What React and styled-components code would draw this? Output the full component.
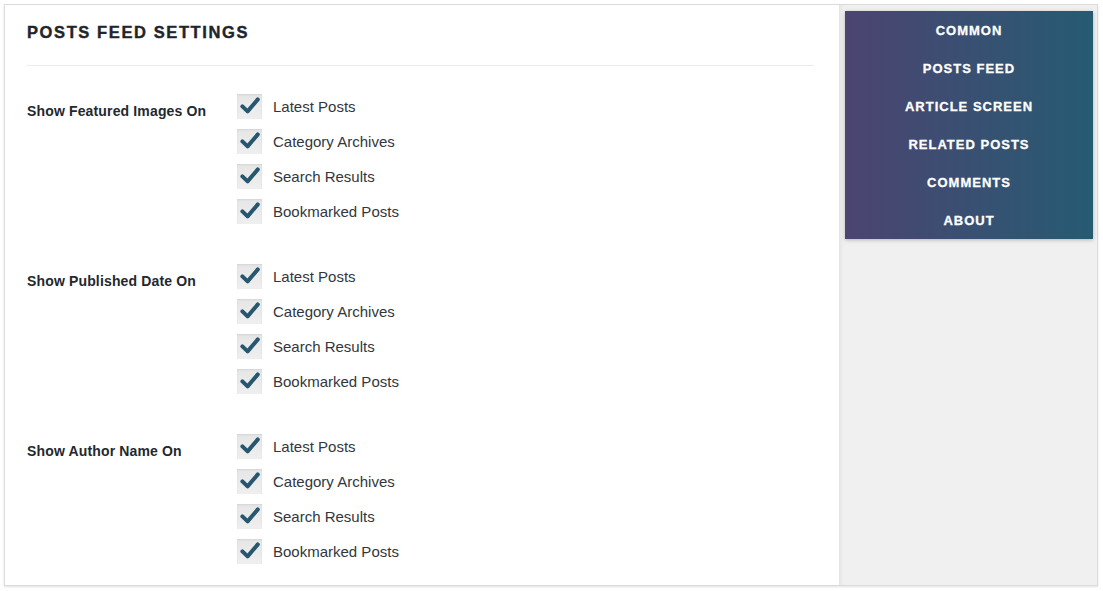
import React from 'react'
import styled, { createGlobalStyle } from 'styled-components'

const groups = [
  { label: 'Show Featured Images On' },
  { label: 'Show Published Date On' },
  { label: 'Show Author Name On' }
]

const options = ['Latest Posts', 'Category Archives', 'Search Results', 'Bookmarked Posts']

const navItems = ['Common', 'Posts Feed', 'Article Screen', 'Related Posts', 'Comments', 'About']

function Check() {
  return (
    <CheckBox>
      <svg width="20" height="20" viewBox="0 0 20 20">
        <path d="M2.4 10.4 L7.6 15.4 L17.8 3.4" fill="none" stroke="#27566f" strokeWidth="4" strokeLinecap="round" strokeLinejoin="round" />
      </svg>
    </CheckBox>
  )
}

export default function App() {
  return (
    <>
      <GlobalStyle />
      <Page>
        <Frame>
          <Main>
            <Title>Posts Feed Settings</Title>
            <Divider />
            {groups.map(g => (
              <Group key={g.label}>
                <GroupLabel>{g.label}</GroupLabel>
                <OptionList>
                  {options.map(o => (
                    <Option key={o}>
                      <Check />
                      <OptionText>{o}</OptionText>
                    </Option>
                  ))}
                </OptionList>
              </Group>
            ))}
          </Main>
          <Sidebar>
            <Nav>
              {navItems.map(n => (
                <NavItem key={n}>{n}</NavItem>
              ))}
            </Nav>
          </Sidebar>
        </Frame>
      </Page>
    </>
  )
}

const GlobalStyle = createGlobalStyle`
  body {
    margin: 0;
    background: #fff;
    font-family: "Liberation Sans", Arial, sans-serif;
  }
`

const Page = styled.div`
  padding: 4px 5px 4px 4px;
`

const Frame = styled.div`
  display: flex;
  border: 1px solid #dcdcdc;
  box-shadow: 0 1px 2px rgba(0, 0, 0, 0.12);
  height: 580px;
  box-sizing: content-box;
`

const Main = styled.div`
  width: 834px;
  padding: 17px 25px 0 22px;
  box-sizing: border-box;
  background: #fff;
`

const Title = styled.h1`
  margin: 0;
  font-family: "Liberation Sans", Arial, sans-serif;
  font-size: 16.5px;
  line-height: 20px;
  font-weight: 700;
  letter-spacing: 1.6px;
  text-transform: uppercase;
  color: #1f252b;
  -webkit-text-stroke: 0.4px #1f252b;
`

const Divider = styled.div`
  height: 1px;
  background: #ececec;
  margin: 23px 0 23px;
`

const Group = styled.div`
  display: grid;
  grid-template-columns: 210px 1fr;
  margin-bottom: 30px;
`

const GroupLabel = styled.div`
  padding-top: 12px;
  font-size: 14px;
  line-height: 20px;
  font-weight: 700;
  color: #23282d;
  letter-spacing: 0.15px;
`

const OptionList = styled.div`
  display: flex;
  flex-direction: column;
`

const Option = styled.div`
  display: flex;
  align-items: center;
  height: 35px;
  gap: 11px;
`

const CheckBox = styled.span`
  width: 25px;
  height: 25px;
  display: flex;
  align-items: center;
  justify-content: center;
  background: linear-gradient(to bottom, #e6e6e6, #efefef);
  box-shadow: inset 0 1px 2px rgba(0, 0, 0, 0.08);
  svg {
    margin-top: -2px;
  }
`

const OptionText = styled.span`
  font-size: 15px;
  color: #32373c;
`

const Sidebar = styled.div`
  flex: 1;
  background: #f0f0f0;
  box-shadow: inset 4px 0 4px -2px rgba(0, 0, 0, 0.06);
  padding: 6px 4px 0 6px;
`

const Nav = styled.nav`
  display: flex;
  flex-direction: column;
  background: linear-gradient(to right, #4c4471, #265b72);
  box-shadow: 0 1px 4px rgba(0, 0, 0, 0.25);
`

const NavItem = styled.div`
  height: 38px;
  display: flex;
  align-items: center;
  justify-content: center;
  color: #fff;
  font-size: 13px;
  font-weight: 700;
  letter-spacing: 1px;
  text-transform: uppercase;
  -webkit-text-stroke: 0.3px #fff;
`
